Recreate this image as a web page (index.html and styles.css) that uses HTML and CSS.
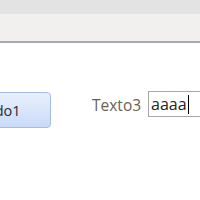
FILE: index.html
```html
<!DOCTYPE html>
<html>
<head>
<meta charset="utf-8">
<link rel="stylesheet" href="styles.css">
</head>
<body>
<div class="top-band"></div>
<div class="toolbar"></div>
<div class="form">
  <button class="btn">Comando1</button>
  <label class="lbl">Texto3</label>
  <div class="input"><span class="val">aaaa</span><span class="caret"></span></div>
</div>
</body>
</html>
```
FILE: styles.css
```css
html, body {
  margin: 0;
  padding: 0;
  background: #ffffff;
  width: 200px;
  height: 200px;
  overflow: hidden;
  font-family: "Open Sans", "Noto Sans", sans-serif;
}
.top-band {
  height: 14px;
  background: #e3e3e3;
}
.toolbar {
  height: 27px;
  background: #f1f0ef;
  border-bottom: 2px solid #a9a9b1;
}
.form {
  display: flex;
  align-items: flex-start;
  margin-top: 48px;
  width: 300px;
}
.btn {
  box-sizing: border-box;
  margin-left: -84px;
  margin-top: 1px;
  width: 135px;
  height: 36px;
  padding: 0;
  border: 1px solid #a3bcec;
  border-radius: 4px;
  background: linear-gradient(#e9f0fd, #c9dbf8);
  font-family: "Open Sans", "Noto Sans", sans-serif;
  font-size: 14.5px;
  color: #2a2a2a;
}
.lbl {
  margin-left: 41px;
  margin-top: 3px;
  font-size: 15.5px;
  color: #6a6055;
}
.input {
  box-sizing: border-box;
  margin-left: 7px;
  width: 80px;
  height: 26px;
  border: 1px solid #a7a7a7;
  display: flex;
  align-items: center;
  padding-left: 2px;
  font-size: 16px;
  color: #222;
}
.caret {
  display: inline-block;
  width: 1px;
  height: 19px;
  background: #000;
  margin-left: 1px;
}
```
